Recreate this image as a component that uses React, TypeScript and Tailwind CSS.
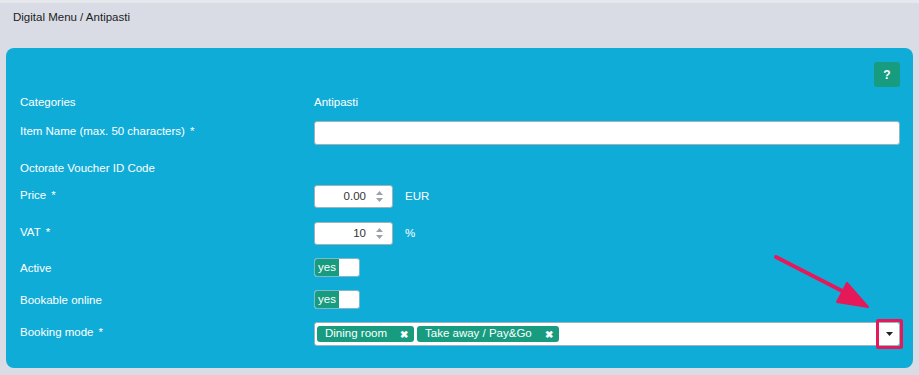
import React from "react";

function Spinner() {
  return (
    <div className="flex flex-col items-center gap-[3px]">
      <svg width="7" height="4" viewBox="0 0 7 4">
        <path d="M0 4 L3.5 0 L7 4 Z" fill="#9aa3ab" />
      </svg>
      <svg width="7" height="4" viewBox="0 0 7 4">
        <path d="M0 0 L3.5 4 L7 0 Z" fill="#9aa3ab" />
      </svg>
    </div>
  );
}

function NumberInput({ value }: { value: string }) {
  return (
    <div className="flex h-[23px] w-[79px] items-center justify-end gap-[10px] rounded-[3px] border border-[#9fb3bd] bg-white pr-[9px] text-[11.5px] text-[#333]">
      <span>{value}</span>
      <Spinner />
    </div>
  );
}

function Toggle() {
  return (
    <div className="flex h-[19px] w-[46px] overflow-hidden rounded-[3px] border border-[#7fb9c9] bg-white">
      <div className="flex w-[24px] items-center justify-center bg-[#179c7f] text-[11.5px] text-white">yes</div>
    </div>
  );
}

function Tag({ label }: { label: string }) {
  return (
    <div className="flex h-[16px] items-center rounded-[3px] bg-[#179c7f] pl-[8px] pr-[6px] text-[11.5px] text-white">
      <span>{label}</span>
      <span className="ml-[13px] text-[10px] font-bold">✖</span>
    </div>
  );
}

function Row({
  label,
  required,
  top,
  children,
}: {
  label: string;
  required?: boolean;
  top: string;
  children?: React.ReactNode;
}) {
  return (
    <div className={`flex items-start ${top}`}>
      <div className="w-[294px] pt-[2px] text-[11.5px] leading-[16px] text-white">
        {label}
        {required && <span className="ml-[5px]">*</span>}
      </div>
      <div className="flex flex-1 items-center">{children}</div>
    </div>
  );
}

export default function App() {
  return (
    <div
      className="relative h-[375px] w-[919px] overflow-hidden border-t-[3px] border-[#e6e8ee] bg-[#d9dce5]"
      style={{ fontFamily: '"Liberation Sans", Arial, sans-serif' }}
    >
      <div className="px-[13px] pt-[6px] text-[11.5px] leading-[16px] text-[#1d1d1d]">Digital Menu / Antipasti</div>

      <div className="mx-[6px] mt-[23px] rounded-[8px] bg-[#10acd8] pb-[22px] pl-[14px] pr-[13px] pt-[14px]">
        <div className="flex justify-end">
          <div className="flex h-[25px] w-[26px] items-center justify-center rounded-[3px] bg-[#179c7f] text-[12px] font-bold text-white">
            ?
          </div>
        </div>

        <Row label="Categories" top="mt-[5px]">
          <span className="pt-[2px] text-[11.5px] leading-[16px] text-white">Antipasti</span>
        </Row>

        <Row label="Item Name (max. 50 characters)" required top="mt-[11px]">
          <div className="h-[24px] w-full rounded-[3px] border border-[#9fb3bd] bg-white" />
        </Row>

        <Row label="Octorate Voucher ID Code" top="mt-[13px]" />

        <Row label="Price" required top="mt-[9px]">
          <NumberInput value="0.00" />
          <span className="ml-[12px] text-[11.5px] text-white">EUR</span>
        </Row>

        <Row label="VAT" required top="mt-[14px]">
          <NumberInput value="10" />
          <span className="ml-[12px] text-[11.5px] text-white">%</span>
        </Row>

        <Row label="Active" top="mt-[13px]">
          <Toggle />
        </Row>

        <Row label="Bookable online" top="mt-[13px]">
          <Toggle />
        </Row>

        <Row label="Booking mode" required top="mt-[13px]">
          <div className="flex h-[24px] w-full items-center gap-[3px] rounded-[3px] border border-[#9fb3bd] bg-white pl-[2px] pr-[6px]">
            <Tag label="Dining room" />
            <Tag label="Take away / Pay&Go" />
            <div className="ml-auto">
              <svg width="7" height="4" viewBox="0 0 7 4">
                <path d="M0 0 L3.5 4 L7 0 Z" fill="#222" />
              </svg>
            </div>
          </div>
        </Row>
      </div>

      {/* annotation: highlight box */}
      <div className="absolute left-[876px] top-[316px] h-[30px] w-[27px] rounded-[2px] border-[3px] border-[#e5195a]" />

      {/* annotation: arrow */}
      <svg className="absolute left-0 top-0" width="919" height="372" viewBox="0 3 919 372">
        <line x1="776" y1="257" x2="850" y2="295" stroke="#e5195a" strokeWidth="4" strokeLinecap="round" />
        <path d="M837 302 L847 283 L868 307 Z" fill="#e5195a" stroke="#e5195a" strokeWidth="2" strokeLinejoin="round" />
      </svg>
    </div>
  );
}
